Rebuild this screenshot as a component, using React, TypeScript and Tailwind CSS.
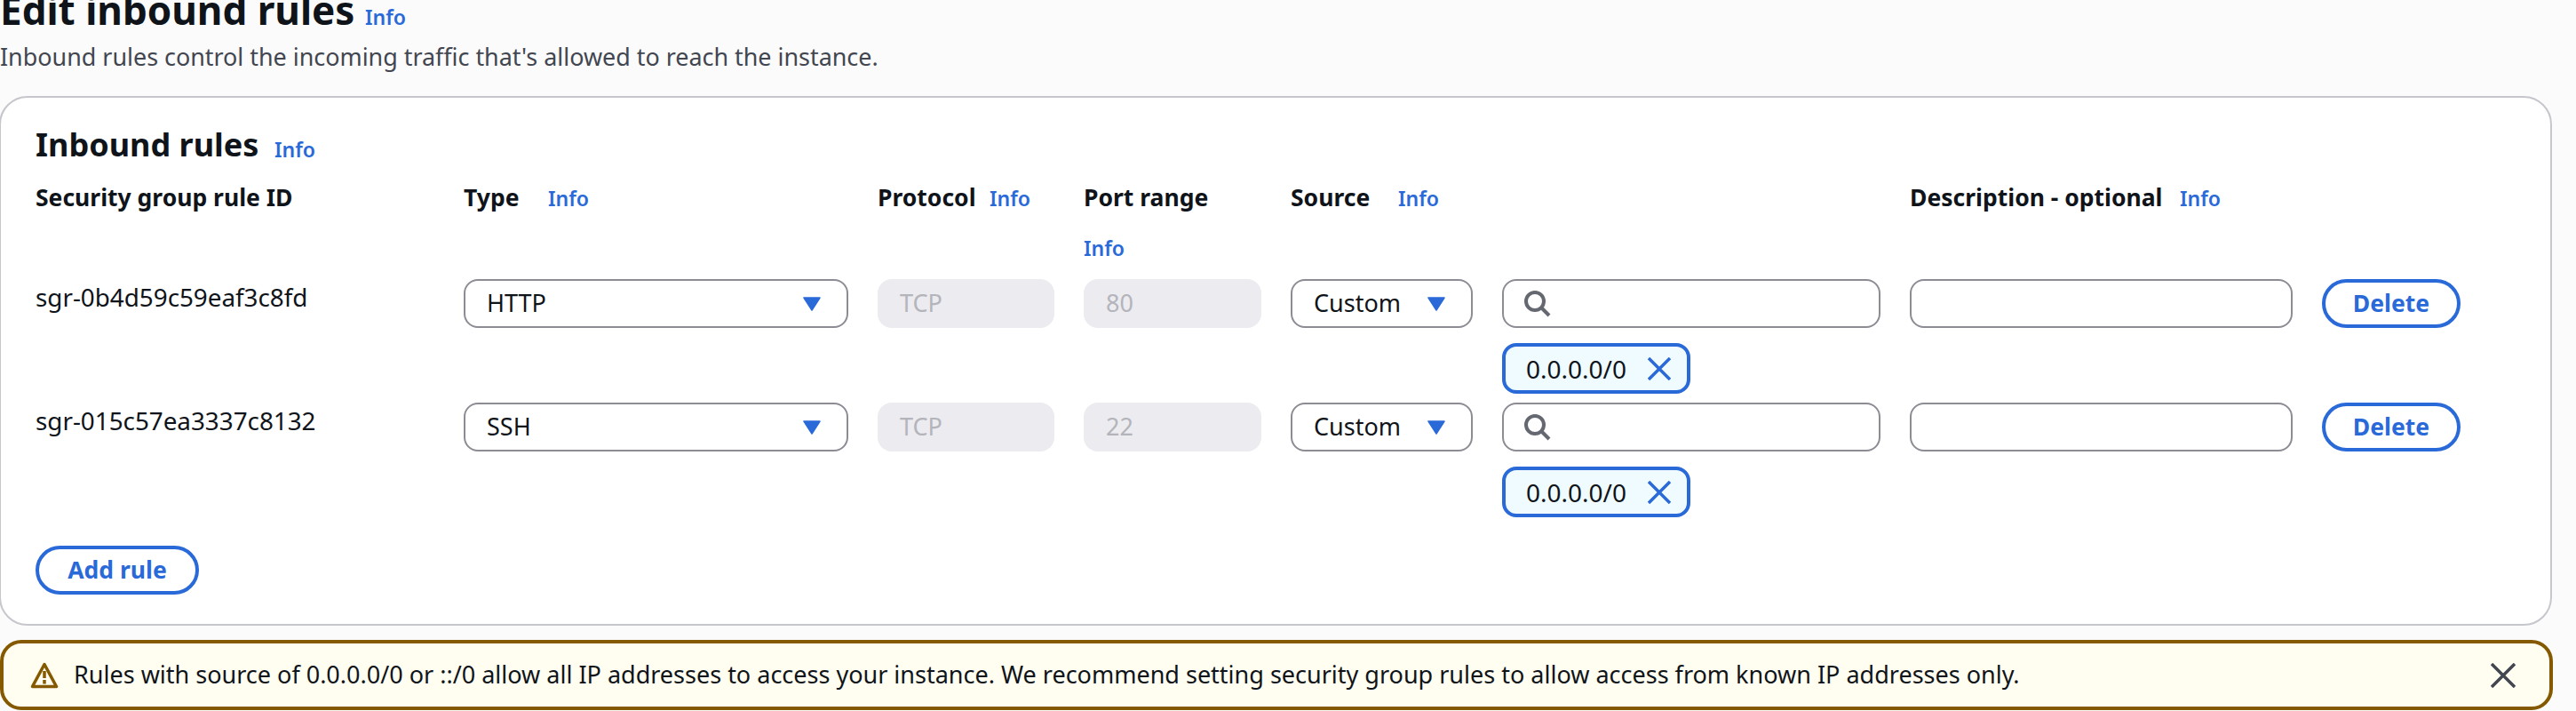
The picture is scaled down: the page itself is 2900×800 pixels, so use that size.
import React from "react";

const Info = ({ className = "" }: { className?: string }) => (
  <span className={`text-[23px] leading-[32px] font-semibold text-[#2a69d8] ${className}`}>Info</span>
);

const Caret = () => (
  <svg width="20" height="16" viewBox="0 0 20 16" className="shrink-0">
    <path d="M1 1 H19 L10 15 Z" fill="#2a69d8" stroke="#2a69d8" strokeWidth="1.5" strokeLinejoin="round" />
  </svg>
);

const Head = ({ label, width, sub, noInfo }: { label: string; width?: string; sub?: boolean; noInfo?: boolean }) => (
  <div className={sub ? "flex flex-col items-start" : "flex items-start"}>
    <span className={`text-[26.5px] leading-[40px] font-bold text-[#0f141a] whitespace-nowrap ${width ?? ""}`}>{label}</span>
    {noInfo ? null : sub ? <Info className="mt-[21px]" /> : <Info className="mt-[5px]" />}
  </div>
);

const Select = ({ value }: { value: string }) => (
  <div className="h-[55px] rounded-[16px] border-2 border-[#8c8c94] bg-white flex items-center justify-between pl-[24px] pr-[29px]">
    <span className="text-[27px] text-[#0f141a]">{value}</span>
    <Caret />
  </div>
);

const Disabled = ({ value }: { value: string }) => (
  <div className="h-[55px] rounded-[16px] bg-[#ebebf0] flex items-center pl-[25px] text-[27px] text-[#b4b4bb]">{value}</div>
);

const Outline = ({ label, className }: { label: string; className: string }) => (
  <div className={`h-[55px] rounded-[28px] border-[4px] border-[#2a69d8] flex items-center justify-center text-[26.5px] font-bold text-[#2a69d8] bg-white ${className}`}>
    {label}
  </div>
);

const Row = ({ id, type, port }: { id: string; type: string; port: string }) => (
  <div className="grid grid-cols-[449px_433px_199px_200px_205px_426px_431px_156px] gap-x-[33px] h-[139px] items-start">
    <div className="text-[27.8px] leading-[40px] text-[#0f141a]">{id}</div>
    <Select value={type} />
    <Disabled value="TCP" />
    <Disabled value={port} />
    <Select value="Custom" />
    <div className="flex flex-col gap-[17px] items-start">
      <div className="h-[55px] w-full rounded-[16px] border-2 border-[#8c8c94] bg-white flex items-center pl-[23px]">
        <svg width="30" height="30" viewBox="0 0 30 30" fill="none" stroke="#656871" strokeWidth="4">
          <circle cx="12" cy="12" r="10" />
          <path d="M19 19 L28 28" />
        </svg>
      </div>
      <div className="h-[57px] w-[212px] rounded-[16px] border-[4px] border-[#2a69d8] bg-[#f0fbff] flex items-center pl-[23px] pr-[18px]">
        <span className="text-[28px] text-[#0f141a]">0.0.0.0/0</span>
        <svg width="26" height="26" viewBox="0 0 26 26" fill="none" stroke="#2a69d8" strokeWidth="3.5" className="ml-auto">
          <path d="M1 1 L25 25 M25 1 L1 25" />
        </svg>
      </div>
    </div>
    <div className="h-[55px] rounded-[16px] border-2 border-[#8c8c94] bg-white" />
    <Outline label="Delete" className="" />
  </div>
);

export default function App() {
  return (
    <div className="w-[2900px] h-[800px] overflow-hidden bg-[#fbfbfb] font-['Noto_Sans',sans-serif]">
      <div className="mt-[-19px] h-[60px] flex items-start">
        <h1 className="text-[44px] leading-[60px] font-bold text-[#0f141a] w-[411px] whitespace-nowrap">Edit inbound rules</h1>
        <Info className="mt-[22px]" />
      </div>
      <p className="text-[26.9px] leading-[40px] text-[#424650] mt-[3px]">Inbound rules control the incoming traffic that's allowed to reach the instance.</p>
      <div className="mt-[24px] w-[2874px] h-[596px] ml-[-1px] rounded-[32px] border-2 border-[#c6c6cd] bg-white pl-[39px] pt-[28px]">
        <div className="flex items-start h-[50px]">
          <h2 className="text-[36px] leading-[50px] font-bold text-[#0f141a] w-[269px] whitespace-nowrap">Inbound rules</h2>
          <Info className="mt-[14px]" />
        </div>
        <div className="grid grid-cols-[449px_433px_199px_200px_205px_426px_431px_156px] gap-x-[33px] h-[112px] mt-[14px] items-start">
          <Head label="Security group rule ID" noInfo />
          <Head label="Type" width="w-[95px]" />
          <Head label="Protocol" width="w-[126px]" />
          <Head label="Port range" sub />
          <Head label="Source" width="w-[121px]" />
          <div />
          <Head label="Description - optional" width="w-[304px]" />
          <div />
        </div>
        <Row id="sgr-0b4d59c59eaf3c8fd" type="HTTP" port="80" />
        <Row id="sgr-015c57ea3337c8132" type="SSH" port="22" />
        <Outline label="Add rule" className="w-[184px] mt-[22px]" />
      </div>
      <div className="mt-[16px] w-[2874px] h-[79px] rounded-[24px] border-[4px] border-[#855900] bg-[#fffef0] flex items-center pl-[30px] pr-[38px]">
        <svg width="32" height="30" viewBox="0 0 32 30" fill="none" className="shrink-0">
          <path d="M16 2.5 L29.5 27.5 H2.5 Z" stroke="#855900" strokeWidth="3.5" strokeLinejoin="round" />
          <path d="M16 10 V18 M16 20 V24.5" stroke="#855900" strokeWidth="3.5" />
        </svg>
        <span className="ml-[17px] text-[27px] text-[#0f141a] flex-1 whitespace-nowrap">Rules with source of 0.0.0.0/0 or ::/0 allow all IP addresses to access your instance. We recommend setting security group rules to allow access from known IP addresses only.</span>
        <svg width="28" height="28" viewBox="0 0 28 28" fill="none" stroke="#424650" strokeWidth="3.5" className="shrink-0">
          <path d="M1 1 L27 27 M27 1 L1 27" />
        </svg>
      </div>
    </div>
  );
}
